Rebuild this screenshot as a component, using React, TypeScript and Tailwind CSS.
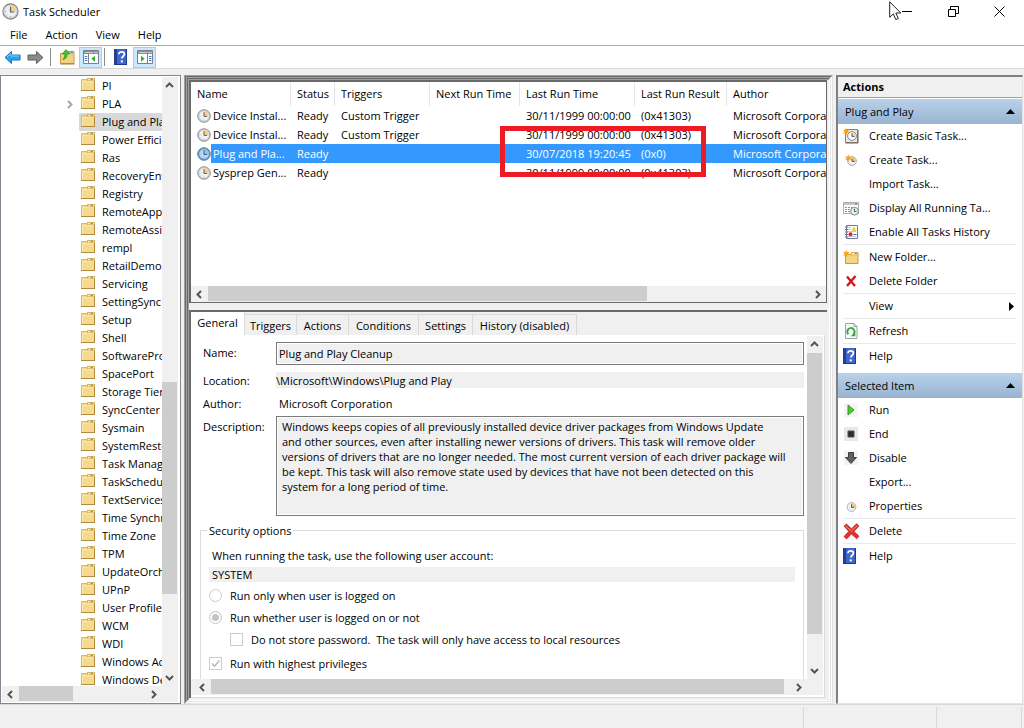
import React from "react";

const treeItems = [
  "PI",
  "PLA",
  "Plug and Play",
  "Power Efficiency Diagnostics",
  "Ras",
  "RecoveryEnvironment",
  "Registry",
  "RemoteApp and Desktop",
  "RemoteAssistance",
  "rempl",
  "RetailDemo",
  "Servicing",
  "SettingSync",
  "Setup",
  "Shell",
  "SoftwareProtectionPlatform",
  "SpacePort",
  "Storage Tiers Management",
  "SyncCenter",
  "Sysmain",
  "SystemRestore",
  "Task Manager",
  "TaskScheduler",
  "TextServicesFramework",
  "Time Synchronization",
  "Time Zone",
  "TPM",
  "UpdateOrchestrator",
  "UPnP",
  "User Profile Service",
  "WCM",
  "WDI",
  "Windows Activation",
  "Windows Defender",
];

const columns = [
  { title: "Name", width: "w-[100px]" },
  { title: "Status", width: "w-[44px]" },
  { title: "Triggers", width: "w-[95px]" },
  { title: "Next Run Time", width: "w-[90px]" },
  { title: "Last Run Time", width: "w-[115px]" },
  { title: "Last Run Result", width: "w-[92px]" },
  { title: "Author", width: "w-[200px]" },
];

const tasks = [
  { name: "Device Instal...", trigger: "Custom Trigger", last: "30/11/1999 00:00:00", result: "(0x41303)" },
  { name: "Device Instal...", trigger: "Custom Trigger", last: "30/11/1999 00:00:00", result: "(0x41303)" },
  { name: "Plug and Pla...", trigger: "", last: "30/07/2018 19:20:45", result: "(0x0)", selected: true },
  { name: "Sysprep Gen...", trigger: "", last: "30/11/1999 00:00:00", result: "(0x41303)" },
];

const tabs = [
  { title: "Triggers", width: "w-[52px]" },
  { title: "Actions", width: "w-[52px]" },
  { title: "Conditions", width: "w-[70px]" },
  { title: "Settings", width: "w-[54px]" },
  { title: "History (disabled)", width: "w-[104px]" },
];

const description = `Windows keeps copies of all previously installed device driver packages from Windows Update
and other sources, even after installing newer versions of drivers. This task will remove older
versions of drivers that are no longer needed. The most current version of each driver package will
be kept. This task will also remove state used by devices that have not been detected on this
system for a long period of time.`;

/* ---------- icons ---------- */

const ClockIcon = ({ size = 16, tint = false }: { size?: number; tint?: boolean }) => (
  <svg width={size} height={size} viewBox="0 0 16 16" className="shrink-0">
    <circle cx="8" cy="8" r="7.2" fill={tint ? "#6f9fce" : "#d0d0d0"} stroke={tint ? "#4f7396" : "#858585"} />
    <circle cx="8" cy="8" r="5.4" fill={tint ? "#b9d8f3" : "#eef1f5"} />
    <path d="M8 8V2.6A5.4 5.4 0 0 1 13.4 8Z" fill={tint ? "#9cc4d8" : "#f5cf85"} />
    <path d="M8 3.6V8.5H11.6" fill="none" stroke={tint ? "#35587c" : "#555e69"} strokeWidth="1.1" />
    <path d="M8 13.2v-1M3 8h1M4.5 11.7l.6-.6" stroke="#8b96a3" strokeWidth=".8" />
  </svg>
);

const FolderIcon = () => (
  <svg width="15" height="15" viewBox="0 0 15 15" className="shrink-0">
    <path d="M.5 2.5V13.5H13.5V1.5H6.5L6 2.5Z" fill="#f6d98c" stroke="#dcb765" />
    <path d="M6.5 1.5H13.5V3.8H6.2Z" fill="#fbeec4" stroke="#cda751" strokeWidth=".8" />
    <path d="M9.5 2.6h2.500" stroke="#4c9bd0" strokeWidth="1.1" />
    <path d="M1.5 4.800H12.500M1.500 4.500V13" stroke="#fdebae" fill="none" />
    <path d="M0 13.500h14M13.500 4v10" stroke="#b08a3e" strokeWidth="1" />
  </svg>
);

const Star = () => (
  <path d="M4 0l1 2.6L7.8 2 6.2 4.2 8 6.4 5.2 6 4.2 8.6 3 6.2.2 6.8 1.8 4.4 0 2.2l2.8.4Z" fill="#f6a21c" />
);

const HelpIcon = () => (
  <svg width="14" height="16" viewBox="0 0 14 16" className="shrink-0">
    <path d="M0 0h13v16H0z" fill="#3f66cc" />
    <path d="M0 0h3v16H0z" fill="#243f94" />
    <path d="M12.5 0v16M0 15.5h13" stroke="#1d3a8f" />
    <path d="M5 5.2C5 3.5 6.2 2.8 7.7 2.8c1.6 0 2.7.9 2.7 2.3 0 2.2-2.6 2-2.6 4.5" fill="none" stroke="#fff" strokeWidth="1.8" />
    <path d="M6.8 11.4h2v2h-2z" fill="#fff" />
  </svg>
);

const ArrowIcon = ({ forward = false }: { forward?: boolean }) => (
  <svg width="17" height="15" viewBox="0 0 17 15">
    {forward ? (
      <path d="M16 7.5L9.5 1.5V5H1v5h8.5v3.5Z" fill="#8a8a8a" stroke="#606060" strokeLinejoin="round" />
    ) : (
      <>
        <path d="M1 7.5L7.5 1.5V5H16v5H7.5v3.5Z" fill="#28a5e8" stroke="#1a70b4" strokeLinejoin="round" />
        <path d="M2.8 7.2L6.8 3.6V6H15" fill="none" stroke="#7fd3fa" />
      </>
    )}
  </svg>
);

const UpFolderIcon = () => (
  <svg width="15" height="16" viewBox="0 0 15 16">
    <path d="M.5 4.5V14.5H14V2.5H7.5L6 4.5Z" fill="#f3d282" stroke="#c59c42" />
    <path d="M10 3.7h3" stroke="#4c9bd0" strokeWidth="1.2" />
    <path d="M.5 15h14" stroke="#a27b2e" />
    <path d="M3 10.5C6 10 7.2 8 7 5H9.8L6 .6 2.2 5H4.8C4.8 7 4.4 9 3 10.5Z" fill="#45c22e" stroke="#2a8f1c" strokeWidth=".7" />
  </svg>
);

const PaneIcon = ({ right = false }: { right?: boolean }) => (
  <svg width="16" height="15" viewBox="0 0 16 15">
    <path d="M.5.5h15v13H.5z" fill="#fff" stroke="#7d8186" />
    <path d="M1 1h14v3H1z" fill="#8b9096" />
    <path d="M2 2.5h8" stroke="#c9cdd1" />
    <path d="M11.5 2.5h1M13.5 2.5h1" stroke="#fff" />
    <path d={right ? "M10.5 4v9" : "M5.5 4v9"} stroke="#7d8186" />
    <path d={right ? "M12 6.5h2.5M12 8.5h2.5M12 10.5h2.5" : "M1.8 6.5h2.5M1.8 8.5h2.5M1.8 10.5h2.5"} stroke="#3f7fc0" />
    <path d={right ? "M4 5.8v6l3.6-3Z" : "M12 5.8v6l-3.6-3Z"} fill="#2fae2f" />
  </svg>
);

const BasicTaskIcon = () => (
  <svg width="16" height="16" viewBox="0 0 16 16">
    <path d="M2.5 1.5h12v13h-12z" fill="#e9e9ea" stroke="#8a7f78" />
    <path d="M2.5 15h12.5V2" fill="none" stroke="#6f625b" />
    <circle cx="9" cy="8" r="4.4" fill="#fafafa" stroke="#808890" />
    <path d="M9 8V4.2A3.9 3.9 0 0 1 12.8 8Z" fill="#f7dc9e" />
    <path d="M9 5.2V8.4h2.6" fill="none" stroke="#4c5763" />
    <g transform="scale(.8)"><Star /></g>
  </svg>
);

const CreateTaskIcon = () => (
  <svg width="16" height="16" viewBox="0 0 16 16">
    <circle cx="9" cy="9" r="4.4" fill="#eef3f8" stroke="#a0a9b2" />
    <path d="M9 9V5A4 4 0 0 1 13 9Z" fill="#f5c871" />
    <path d="M9 6.4V9.4h2.8" fill="none" stroke="#4c5763" />
    <g transform="translate(2 2.500) scale(.85)"><Star /></g>
  </svg>
);

const RunningIcon = () => (
  <svg width="16" height="16" viewBox="0 0 16 16">
    <path d="M.5 2.5h15v11H.5z" fill="#fff" stroke="#a6abb0" />
    <path d="M1 3h14v2H1z" fill="#c1c6cc" />
    <path d="M12 4h2" stroke="#4d6680" />
    <path d="M2 7.5h2M5 7.5h2M2 9.5h2M5 9.5h2M2 11.5h2M5 11.5h2M8 7.5h2" stroke="#7f94aa" />
    <circle cx="11.5" cy="11.2" r="3.9" fill="#e3ecea" stroke="#7d8a8c" />
    <path d="M11.5 8.8v2.7h2" fill="none" stroke="#47606a" />
  </svg>
);

const HistoryIcon = () => (
  <svg width="16" height="16" viewBox="0 0 16 16">
    <path d="M3.5 1.500h11v13h-11z" fill="#fff" stroke="#6f7c95" />
    <path d="M5 3.500h3M5 5.500h3M5 7.500h8M5 12.500h8" stroke="#b7c8e4" />
    <path d="M2 3h3M2 5.500h3M2 8h3M2 10.500h3M2 13h3" stroke="#6c7380" />
    <path d="M11 2.500l2.400 4.200H8.600Z" fill="#f7c325" />
    <circle cx="7.500" cy="10.200" r="2" fill="#d8291f" />
    <path d="M10.500 10.500h3" stroke="#3868bd" fill="none" />
  </svg>
);

const NewFolderIcon = () => (
  <svg width="16" height="16" viewBox="0 0 16 16">
    <path d="M2.5 5.5V14.5H15V3.5H8.5L7.5 5.5Z" fill="#f5d584" stroke="#c59c42" />
    <path d="M8.5 3.5H15V6H8Z" fill="#fff3cd" stroke="#cda751" strokeWidth=".8" />
    <path d="M11.5 4.5h2.5" stroke="#4c9bd0" />
    <g transform="translate(0 1) scale(.85)"><Star /></g>
  </svg>
);

const SmallCross = () => (
  <svg width="16" height="16" viewBox="0 0 16 16">
    <path d="M4 3.5L12 13M12.5 3L4 13" stroke="#d2181c" strokeWidth="2.4" fill="none" />
  </svg>
);

const BigCross = () => (
  <svg width="17" height="17" viewBox="0 0 17 17">
    <path d="M1 3L3.5 1 8.5 5.7 13.5.8 16 3 11 8.4l5 4.8-2.3 2.6L8.4 11l-4.800 5L1 13.600l4.800-5.200Z" fill="#e3312b" stroke="#a81d1b" strokeWidth=".7" />
    <path d="M2.6 3l5.8 5L14 2.8" fill="none" stroke="#f58a80" />
  </svg>
);

const RefreshIcon = () => (
  <svg width="16" height="16" viewBox="0 0 16 16">
    <path d="M2.5.5h8.5l3 3v12H2.5z" fill="#f7f9fa" stroke="#9aa3aa" />
    <path d="M11 .5v3h3" fill="none" stroke="#9aa3aa" />
    <path d="M5.4 11.3A3.6 3.6 0 1 1 10.6 11" fill="none" stroke="#39a935" strokeWidth="1.9" />
    <path d="M12.3 8.6v4.6H7.8Z" fill="#39a935" />
  </svg>
);

const PlayIcon = () => (
  <svg width="16" height="16" viewBox="0 0 16 16">
    <path d="M1 1h14v14H1z" fill="#f5f5f5" />
    <path d="M5 3v10l6-5Z" fill="#56c43a" stroke="#2c9a1f" />
  </svg>
);

const StopIcon = () => (
  <svg width="16" height="16" viewBox="0 0 16 16">
    <path d="M1 1h14v14H1z" fill="#e8e8e8" />
    <path d="M5 5h6v6H5z" fill="#2b2b2b" stroke="#555" />
  </svg>
);

const DownIcon = () => (
  <svg width="16" height="16" viewBox="0 0 16 16">
    <path d="M1 1h14v14H1z" fill="#f3f3f3" />
    <path d="M5.5 2.5h5v5h3L8 13.5 2.5 7.5h3Z" fill="#606060" stroke="#3f3f3f" strokeLinejoin="round" />
  </svg>
);

const PropertiesIcon = () => (
  <svg width="16" height="16" viewBox="0 0 16 16">
    <circle cx="8.5" cy="9" r="4.4" fill="#eef3f8" stroke="#a9b2bb" />
    <path d="M8.5 9V5A4 4 0 0 1 12.5 9Z" fill="#f5c871" />
    <path d="M8.5 6.4V9.4h2.8" fill="none" stroke="#4c5763" />
  </svg>
);

type Dir = "up" | "down" | "left" | "right";

const arrowPaths: Record<Dir, string> = {
  up: "M1 6L4.5 2.5 8 6",
  down: "M1 3L4.5 6.5 8 3",
  left: "M6 1L2.5 4.5 6 8",
  right: "M3 1L6.5 4.5 3 8",
};

const Chevron = ({ dir, color = "#555" }: { dir: Dir; color?: string }) => (
  <svg width="9" height="9" viewBox="0 0 9 9">
    <path d={arrowPaths[dir]} fill="none" stroke={color} strokeWidth="2" />
  </svg>
);

/* ---------- shared pieces ---------- */

interface ScrollProps {
  start?: number;
  size: number;
}

const HScroll: React.FC<ScrollProps> = ({ start = 0, size }) => (
  <div className="flex h-4 min-w-0 flex-1 bg-[#f0f0f0]">
    <button aria-label="Scroll left" className="flex w-[17px] items-center justify-center">
      <Chevron dir="left" />
    </button>
    <div className="flex flex-1">
      <div className="h-[15px] bg-[#cdcdcd]" style={{ marginLeft: `${start}%`, width: `${size}%` }} />
    </div>
    <button aria-label="Scroll right" className="flex w-[17px] items-center justify-center">
      <Chevron dir="right" />
    </button>
  </div>
);

const VScroll: React.FC<ScrollProps> = ({ start = 0, size }) => (
  <div className="flex w-4 shrink-0 flex-col bg-[#f0f0f0]">
    <button aria-label="Scroll up" className="flex h-[17px] w-[15px] items-center justify-center">
      <Chevron dir="up" />
    </button>
    <div className="flex min-h-0 flex-1 flex-col">
      <div style={{ height: `${start}%` }} />
      <div className="w-[15px] bg-[#cdcdcd]" style={{ height: `${size}%` }} />
    </div>
    <button aria-label="Scroll down" className="flex h-[17px] w-[15px] items-center justify-center">
      <Chevron dir="down" />
    </button>
  </div>
);

const TitleBar = () => (
  <div className="flex h-[23px] items-center justify-between">
    <div className="flex items-center gap-1 pl-0.5">
      <ClockIcon size={17} />
      <h1>Task Scheduler</h1>
    </div>
    <div className="flex h-5">
      <button aria-label="Minimize" className="flex w-[46px] items-center justify-center">
        <svg width="11" height="11"><path d="M0 5.5h10" stroke="#000" /></svg>
      </button>
      <button aria-label="Restore" className="flex w-[46px] items-center justify-center">
        <svg width="11" height="11" fill="none"><path d="M.5 3.5h7v7h-7zM2.5 3.5v-3h8v7h-3" stroke="#000" /></svg>
      </button>
      <button aria-label="Close" className="flex w-[46px] items-center justify-center">
        <svg width="11" height="11"><path d="M.5.5l10 10M10.5.5l-10 10" stroke="#000" /></svg>
      </button>
      <span className="w-0.5" />
    </div>
  </div>
);

const ToolBar = () => (
  <div className="flex h-[23px] items-center border-b border-[#d9d9d9] pl-1">
    <button aria-label="Back"><ArrowIcon /></button>
    <button aria-label="Forward" className="ml-1.5"><ArrowIcon forward /></button>
    <span className="ml-1.5 h-[18px] w-px bg-[#8d8d8d]" />
    <button aria-label="Up one level" className="ml-[9px]"><UpFolderIcon /></button>
    <button aria-label="Console tree" className="ml-1 flex h-[21px] w-[23px] items-center justify-center border border-[#99d1ff] bg-[#cce8ff]">
      <PaneIcon />
    </button>
    <span className="ml-0.5 h-[18px] w-px bg-[#8d8d8d]" />
    <button aria-label="Help" className="ml-[9px]"><HelpIcon /></button>
    <button aria-label="Action pane" className="ml-[5px] flex h-[21px] w-[23px] items-center justify-center border border-[#99d1ff] bg-[#cce8ff]">
      <PaneIcon right />
    </button>
  </div>
);

const Tree = () => (
  <nav className="flex w-[181px] shrink-0 flex-col border border-[#828790] bg-white py-px pr-0.5 pl-px">
    <div className="flex min-h-0 flex-1">
      <ul className="min-w-0 flex-1 overflow-hidden">
        {treeItems.map((item) => (
          <li key={item} className="flex h-[18px]">
            <span className="flex w-[77px] shrink-0 items-center justify-end pr-[5px]">
              {item === "PLA" && <Chevron dir="right" color="#a6a6a6" />}
            </span>
            <a
              href="#"
              className={`flex min-w-0 flex-1 gap-1.5 overflow-hidden pl-0.5 whitespace-nowrap ${
                item === "Plug and Play" ? "bg-[#d9d9d9]" : ""
              }`}
            >
              <FolderIcon />
              <span className="leading-[18px]">{item}</span>
            </a>
          </li>
        ))}
      </ul>
      <VScroll start={50} size={37} />
    </div>
    <div className="flex bg-[#f0f0f0]">
      <HScroll size={43} />
      <span className="w-4" />
    </div>
  </nav>
);

const TaskList = () => (
  <section className="flex h-[223px] flex-col border-2 border-r border-b border-[#696969] bg-white">
    <div className="relative min-h-0 flex-1 overflow-hidden">
      <table className="w-[736px] table-fixed border-separate border-spacing-0 text-left whitespace-nowrap">
        <thead>
          <tr className="h-6">
            {columns.map((col) => (
              <th key={col.title} className={`border-r border-[#e5e5e5] p-0 pb-0.5 pl-1.5 font-normal ${col.width}`}>
                {col.title}
              </th>
            ))}
          </tr>
        </thead>
        <tbody>
          {tasks.map((task, idx) => (
            <tr key={idx} className={`h-[19px] ${task.selected ? "bg-[#3399ff] text-white" : ""}`}>
              <td className="p-0">
                <div className="flex h-[19px] items-center">
                  <span className="flex h-[19px] w-5 items-center bg-white pl-1.5">
                    <ClockIcon size={14} tint={task.selected} />
                  </span>
                  <span className="pl-0.5">{task.name}</span>
                </div>
              </td>
              <td className="p-0 pl-1.5">Ready</td>
              <td className="p-0 pl-1.5">{task.trigger}</td>
              <td className="p-0" />
              <td className="p-0 pl-1.5">{task.last}</td>
              <td className="p-0 pl-1.5">{task.result}</td>
              <td className="p-0 pl-1.5">Microsoft Corporation</td>
            </tr>
          ))}
        </tbody>
      </table>
      {/* highlight around the last run of the cleanup task */}
      <div className="pointer-events-none absolute top-[44px] left-[309px] h-[51px] w-[206px] border-5 border-[#ed1c24]" />
    </div>
    <div className="flex">
      <HScroll size={73} />
    </div>
  </section>
);

const GeneralTab = () => (
  <form className="min-w-0 flex-1 overflow-hidden pt-1.5 pr-[3px] pl-[9px]">
    <div className="grid grid-cols-[73px_1fr] items-start pl-[3px]">
      <label htmlFor="name" className="mt-[3px]">Name:</label>
      <input id="name" readOnly value="Plug and Play Cleanup" className="h-[23px] border border-[#7a7a7a] bg-[#f0f0f0] px-0.5 shadow-[inset_0_0_0_1px_#fff]" />
      <label htmlFor="location" className="mt-2">Location:</label>
      <input id="location" readOnly value="\Microsoft\Windows\Plug and Play" className="mt-[7px] h-4 bg-[#f0f0f0]" />
      <span className="mt-2">Author:</span>
      <span className="mt-2 pl-[3px]">Microsoft Corporation</span>
      <label htmlFor="description" className="mt-2">Description:</label>
      <textarea
        id="description"
        readOnly
        value={description}
        className="mt-[5px] h-[100px] resize-none overflow-hidden border border-[#7a7a7a] bg-[#f0f0f0] px-[5px] py-0.5 whitespace-pre shadow-[inset_0_0_0_1px_#fff]"
      />
    </div>
    <fieldset className="mt-[7px] h-[200px] border border-[#dcdcdc] px-2">
      <legend className="-ml-0.5 px-0.5">Security options</legend>
      <label htmlFor="account" className="mt-2.5 block pl-[3px]">
        When running the task, use the following user account:
      </label>
      <input id="account" readOnly value="SYSTEM" className="mt-1 block h-[15px] w-full bg-[#f0f0f0] px-[3px]" />
      <label className="mt-[5px] flex h-4 items-center gap-2">
        <input type="radio" name="logon" className="size-[13px] appearance-none rounded-full border border-[#cccccc]" />
        Run only when user is logged on
      </label>
      <label className="mt-1.5 flex h-4 items-center gap-2">
        <input type="radio" name="logon" defaultChecked className="size-[13px] appearance-none rounded-full border border-[#cccccc] bg-[#c4c4c4] shadow-[inset_0_0_0_2px_#fff]" />
        Run whether user is logged on or not
      </label>
      <label className="mt-1.5 ml-[21px] flex h-4 items-center gap-2 whitespace-pre">
        <input type="checkbox" className="size-[13px] appearance-none border border-[#cccccc]" />
        {"Do not store password.  The task will only have access to local resources"}
      </label>
      <label className="relative mt-2 flex h-4 items-center gap-2">
        <input type="checkbox" defaultChecked className="size-[13px] appearance-none border border-[#cccccc]" />
        <svg width="13" height="13" className="absolute left-0">
          <path d="M3 6.5l2.5 2.7L10.5 3.5" fill="none" stroke="#b5b5b5" strokeWidth="1.3" />
        </svg>
        Run with highest privileges
      </label>
    </fieldset>
  </form>
);

const TaskDetails = () => (
  <section className="mt-[7px] flex min-h-0 flex-1 flex-col border-t-2 border-l-2 border-[#696969] bg-[#f0f0f0] pr-0.5">
    <div role="tablist" className="flex h-[23px] items-end">
      <button role="tab" aria-selected="true" className="h-[23px] w-[54px] border-r border-[#d9d9d9] bg-white pb-0.5">
        General
      </button>
      {tabs.map((tab) => (
        <button key={tab.title} role="tab" aria-selected="false" className={`h-[21px] border-t border-r border-[#d9d9d9] ${tab.width}`}>
          {tab.title}
        </button>
      ))}
    </div>
    <div className="flex min-h-0 flex-1 flex-col border-r border-b border-[#dcdcdc] bg-white pt-px pr-px pb-0.5">
      <div className="flex min-h-0 flex-1">
        <GeneralTab />
        <VScroll size={91} />
      </div>
      <div className="flex bg-[#f0f0f0] pl-[3px]">
        <HScroll size={99} />
        <span className="w-4" />
      </div>
    </div>
  </section>
);

interface Action {
  text: string;
  icon?: React.ReactNode;
  line?: boolean;
  menu?: boolean;
}

const folderActions: Action[] = [
  { text: "Create Basic Task...", icon: <BasicTaskIcon /> },
  { text: "Create Task...", icon: <CreateTaskIcon /> },
  { text: "Import Task..." },
  { text: "Display All Running Ta...", icon: <RunningIcon /> },
  { text: "Enable All Tasks History", icon: <HistoryIcon />, line: true },
  { text: "New Folder...", icon: <NewFolderIcon /> },
  { text: "Delete Folder", icon: <SmallCross />, line: true },
  { text: "View", menu: true, line: true },
  { text: "Refresh", icon: <RefreshIcon />, line: true },
  { text: "Help", icon: <HelpIcon /> },
];

const itemActions: Action[] = [
  { text: "Run", icon: <PlayIcon /> },
  { text: "End", icon: <StopIcon /> },
  { text: "Disable", icon: <DownIcon /> },
  { text: "Export..." },
  { text: "Properties", icon: <PropertiesIcon />, line: true },
  { text: "Delete", icon: <BigCross />, line: true },
  { text: "Help", icon: <HelpIcon /> },
];

const ActionGroup = ({ title, actions }: { title: string; actions: Action[] }) => (
  <div className="mb-[5px]">
    <button className="flex h-[25px] w-full items-center justify-between bg-linear-to-b from-[#b9d1ea] to-[#99b4d1] pr-[7px] pl-[7px]">
      {title}
      <svg width="9" height="5"><path d="M0 5L4.500 0 9 5Z" /></svg>
    </button>
    <ul className="pr-1.5 pl-[5px]">
      {actions.map((action) => (
        <li key={action.text} className={action.line ? "border-b border-[#e9e9e9]" : ""}>
          <button className="flex h-6 w-full items-center text-left whitespace-nowrap">
            <span className="flex w-[26px] items-center">{action.icon}</span>
            <span className="flex-1 pb-0.5">{action.text}</span>
            {action.menu && <svg width="5" height="9" className="mr-0.5"><path d="M0 0L5 4.500 0 9Z" /></svg>}
          </button>
        </li>
      ))}
    </ul>
  </div>
);

const ActionsPane = () => (
  <aside className="mr-px w-[187px] shrink-0 border-t-2 border-r border-b border-l-2 border-t-[#808080] border-r-[#e3e3e3] border-b-[#e3e3e3] border-l-[#808080] bg-white">
    <h2 className="mb-px h-[21px] border-b border-[#a0a0a0] bg-[#f0f0f0] pt-0.5 pl-[5px] font-bold">Actions</h2>
    <ActionGroup title="Plug and Play" actions={folderActions} />
    <ActionGroup title="Selected Item" actions={itemActions} />
  </aside>
);

const App: React.FC = () => {
  return (
    <div className="relative flex h-screen flex-col overflow-hidden bg-white font-['Open_Sans',sans-serif] text-[11px] leading-[15px] text-black">
      <TitleBar />
      <div className="flex h-[23px] items-center gap-[18px] border-b border-[#b0b0b0] pl-2.5">
        <button>File</button>
        <button>Action</button>
        <button>View</button>
        <button>Help</button>
      </div>
      <ToolBar />

      <main className="flex min-h-0 flex-1 bg-[#f0f0f0] pt-1.5">
        <Tree />
        {/* stacked bevels, dark towards the top left and light towards the bottom right */}
        <div className="mx-[3px] flex min-w-0 flex-1 border border-t-[#a0a0a0] border-r-[#e3e3e3] border-b-[#e3e3e3] border-l-[#a0a0a0]">
          <div className="flex min-w-0 flex-1 border border-t-[#696969] border-r-white border-b-white border-l-[#696969]">
            <div className="flex min-w-0 flex-1 border border-t-[#a0a0a0] border-r-[#e3e3e3] border-b-[#e3e3e3] border-l-[#a0a0a0]">
              <div className="flex min-w-0 flex-1 border border-t-[#696969] border-r-white border-b-white border-l-[#696969]">
                <div className="flex min-w-0 flex-1 flex-col border-t border-l border-[#a0a0a0] pr-0.5 pb-0.5">
                  <TaskList />
                  <TaskDetails />
                </div>
              </div>
            </div>
          </div>
        </div>
        <ActionsPane />
      </main>

      <footer className="flex h-6 justify-end border-t border-[#d9d9d9] bg-[#f0f0f0] pt-0.5 pr-0.5">
        <span className="w-[133px] border-l border-[#d9d9d9]" />
        <span className="w-[86px] border-x border-[#d9d9d9]" />
      </footer>

      {/* mouse pointer */}
      <svg width="13" height="20" viewBox="0 0 13 20" className="absolute top-px right-[122px]">
        <path d="M.7.8V16.300L4.300 12.900 6.800 18.600 9.300 17.500 6.800 12H11.800Z" fill="#fff" stroke="#222" />
      </svg>
    </div>
  );
};

export default App;
